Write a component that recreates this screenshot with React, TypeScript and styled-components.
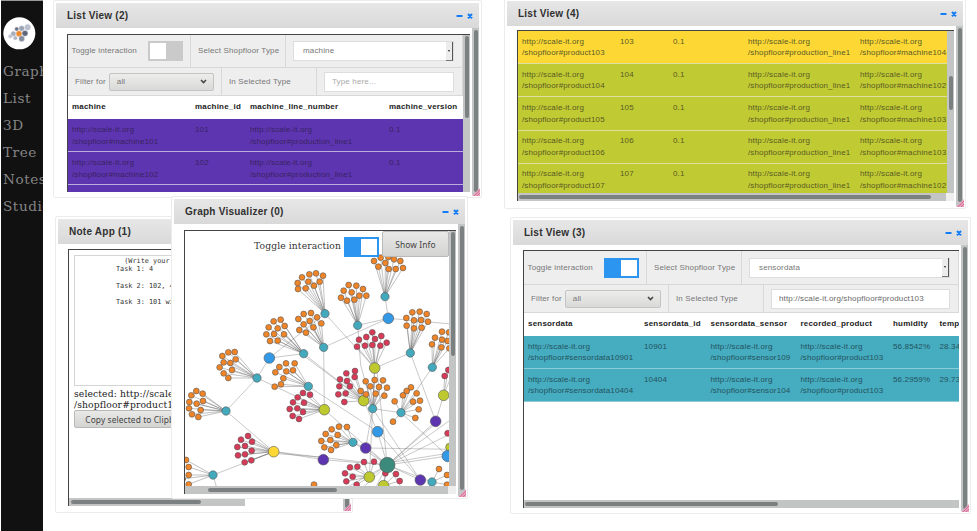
import React from "react";
import styled, { createGlobalStyle } from "styled-components";

const GlobalStyle = createGlobalStyle`
  * { box-sizing: border-box; }
  body { margin: 0; background: #fff; overflow: hidden; }
`;

const SANS = `"Liberation Sans", Arial, sans-serif`;
const SERIF = `"DejaVu Serif", serif`;

/* ---------- desktop and sidebar ---------- */

const Desktop = styled.div`
  position: relative;
  display: flex;
  width: 977px;
  height: 531px;
  overflow: hidden;
  background: #fff;
`;

const Sidebar = styled.nav`
  display: flex;
  flex-direction: column;
  width: 42px;
  margin-left: 1px;
  padding: 16px 0 0 2px;
  overflow: hidden;
  background: #111;
  border-top: 1px solid #999;
  font: 13.6px/26.9px ${SERIF};
  letter-spacing: 0.55px;
  color: #858585;
  white-space: nowrap;
`;

const Logo = styled.svg`
  flex: none;
  width: 33px;
  height: 33px;
  margin-bottom: 8px;
`;

/* ---------- window chrome ---------- */

const WindowBox = styled.section<{ $x: number; $y: number; $w: number; $h: number }>`
  position: absolute;
  left: ${(p) => p.$x}px;
  top: ${(p) => p.$y}px;
  width: ${(p) => p.$w}px;
  height: ${(p) => p.$h}px;
  display: flex;
  flex-direction: column;
  padding: 2px;
  background: #fff;
  border: 1px solid #ececec;
  border-radius: 2px;
  font: 8px/11.7px ${SANS};
  letter-spacing: 0.15px;
  color: #666;
`;

const TitleBar = styled.header`
  flex: none;
  display: flex;
  align-items: center;
  height: 25px;
  padding: 0 5px 0 11px;
  background: linear-gradient(#e7e7e7, #d9d9d9);
  color: #303030;
`;

const Title = styled.h1`
  flex: 1;
  margin: 0;
  font: bold 10px/24px ${SANS};
  letter-spacing: 0.24px;
  white-space: nowrap;
`;

const Controls = styled.svg`
  width: 18px;
  height: 8px;
`;

const Body = styled.div`
  flex: 1;
  display: flex;
  gap: 2px;
  min-height: 0;
`;

const Frame = styled.div<{ $top: number; $left: number; $bottom: number }>`
  flex: 1;
  min-width: 0;
  display: flex;
  flex-direction: column;
  margin: ${(p) => p.$top}px 0 ${(p) => p.$bottom}px ${(p) => p.$left}px;
  border-top: 1.5px solid #444;
  border-left: 1px solid #444;
  overflow: hidden;
`;

const Pane = styled.div`
  flex: 1;
  display: flex;
  min-height: 0;
  min-width: 0;
`;

const Content = styled.div`
  flex: 1;
  min-width: 0;
  overflow: hidden;
`;

const Scrollbar = styled.div<{ $before: number; $length: number; $horizontal?: boolean; $end?: boolean }>`
  flex: none;
  display: flex;
  background: ${(p) =>
    p.$end ? "linear-gradient(90deg, transparent calc(100% - 8px), #eee 0), #c3c5c5" : "#c3c5c5"};
  ${(p) =>
    p.$horizontal
      ? `height: 8px; padding: 2px 0 2px ${p.$before}px;`
      : `width: 7px; padding: ${p.$before}px 1.5px 0; flex-direction: column;`}

  &::before {
    content: "";
    border-radius: 2px;
    background: #7b8080;
    ${(p) => (p.$horizontal ? `width: ${p.$length}px; height: 4px;` : `height: ${p.$length}px; width: 4px;`)}
  }
`;

const ResizeGrip = styled.svg`
  position: absolute;
  right: 1px;
  bottom: 1px;
  width: 8px;
  height: 8px;
`;

interface WindowProps {
  title: string;
  x: number;
  y: number;
  w: number;
  h: number;
  frameTop: number;
  frameLeft?: number;
  frameBottom: number;
  thumb: number;
  controls?: boolean;
  children: React.ReactNode;
}

function Window({ title, x, y, w, h, frameTop, frameLeft = 10, frameBottom, thumb, children }: WindowProps) {
  return (
    <WindowBox $x={x} $y={y} $w={w} $h={h}>
      <TitleBar>
        <Title>{title}</Title>
        <Controls viewBox="0 0 18 8" stroke="#147df5" strokeWidth="2">
          <path d="M.5 4H6.5M12 2l4 4.2M16 2l-4 4.2" />
        </Controls>
      </TitleBar>
      <Body>
        <Frame $top={frameTop} $left={frameLeft} $bottom={frameBottom}>
          {children}
        </Frame>
        <Scrollbar $before={2} $length={thumb} />
      </Body>
      <ResizeGrip viewBox="0 0 8 8">
        <path d="M8 0V8H0Z" fill="#e6a3bd" />
        <path d="M2 8L8 2M5 8L8 5" stroke="#d2608f" strokeWidth=".8" />
      </ResizeGrip>
    </WindowBox>
  );
}

/* ---------- list view ---------- */

const ToolRow = styled.div<{ $h: number }>`
  display: flex;
  height: ${(p) => p.$h}px;
  background: #eee;
  border-bottom: 1px solid #d8d8d8;
  color: #777;
`;

const ToolCell = styled.div<{ $w?: number; $pad?: number }>`
  ${(p) => (p.$w ? `flex: none; width: ${p.$w}px;` : "flex: 1;")}
  display: flex;
  align-items: center;
  padding-left: ${(p) => p.$pad ?? 7}px;
  border-right: 1px solid #d8d8d8;
  white-space: nowrap;
`;

const ToggleTrack = styled.span<{ $on?: boolean }>`
  display: flex;
  justify-content: ${(p) => (p.$on ? "flex-end" : "flex-start")};
  width: 35px;
  height: 20px;
  margin-left: auto;
  margin-right: 7px;
  padding: 2px;
  background: ${(p) => (p.$on ? "#2b95f0" : "#cacaca")};

  &::before {
    content: "";
    width: 16px;
    background: #fff;
  }
`;

const TypeSelect = styled.span`
  flex: 1;
  display: flex;
  align-items: center;
  justify-content: space-between;
  height: 20px;
  margin-right: 8px;
  padding-left: 9px;
  background: #fff;
  border: 1px solid #ddd;
`;

const Spinner = styled.span`
  display: flex;
  align-items: center;
  justify-content: center;
  width: 7px;
  height: 19px;
  background: #ececec;
  border-right: 1px solid #555;
  border-bottom: 1px solid #777;

  &::before {
    content: "";
    border: 1.5px solid transparent;
    border-top: 2px solid #222;
    border-bottom: 0;
  }
`;

const FilterSelect = styled.span`
  flex: 1;
  display: flex;
  align-items: center;
  justify-content: space-between;
  height: 18px;
  margin: 0 7px 0 3px;
  padding: 0 6px 0 7px;
  background: linear-gradient(#ededec, #d9d9d7);
  border: 1px solid #c4c4c4;
  border-radius: 2px;
`;

const TextInput = styled.span<{ $muted?: boolean }>`
  flex: 1;
  height: 20px;
  margin-right: 8px;
  padding: 0 7px;
  line-height: 18px;
  background: #fff;
  border: 1px solid #ddd;
  color: ${(p) => (p.$muted ? "#aaa" : "#6a6a6a")};
`;

const HeadRow = styled.div<{ $cols: string }>`
  display: grid;
  grid-template-columns: ${(p) => p.$cols};
  height: 23px;
  padding-left: 4px;
  line-height: 22px;
  font-weight: bold;
  letter-spacing: 0.2px;
  color: #222;
  white-space: nowrap;
`;

const DataRow = styled.div<{ $cols: string; $bg: string; $fg: string; $line: string; $pt: number }>`
  display: grid;
  grid-template-columns: ${(p) => p.$cols};
  height: 33.2px;
  padding: ${(p) => p.$pt}px 0 0 4px;
  background: ${(p) => p.$bg};
  border-bottom: 1px solid ${(p) => p.$line};
  color: ${(p) => p.$fg};
  white-space: pre;
`;

const uri = (path: string) => `http://scale-it.org\n/shopfloor#${path}`;

interface ToolbarProps {
  on?: boolean;
  type: string;
  filter?: string;
  toggleW: number;
  filterW: number;
  rowH: number;
}

function Toolbar({ on, type, filter, toggleW, filterW, rowH }: ToolbarProps) {
  return (
    <>
      <ToolRow $h={rowH}>
        <ToolCell $w={toggleW} $pad={3.5}>
          Toggle interaction
          <ToggleTrack $on={on} />
        </ToolCell>
        <ToolCell $w={95}>Select Shopfloor Type</ToolCell>
        <ToolCell>
          <TypeSelect>
            {type}
            <Spinner />
          </TypeSelect>
        </ToolCell>
      </ToolRow>
      <ToolRow $h={28}>
        <ToolCell $w={filterW}>
          Filter for
          <FilterSelect>
            all
            <svg width="7" height="5" viewBox="0 0 7 5" fill="none" stroke="#444" strokeWidth="1.5">
              <path d="M1 1l2.5 2.6L6 1" />
            </svg>
          </FilterSelect>
        </ToolCell>
        <ToolCell $w={95}>In Selected Type</ToolCell>
        <ToolCell>
          <TextInput $muted={!filter}>{filter ?? "Type here..."}</TextInput>
        </ToolCell>
      </ToolRow>
    </>
  );
}

const MACHINE_COLS = "123px 55px 139px 1fr";
const PRODUCT_COLS = "98px 53px 75px 112px 1fr";
const SENSOR_COLS = "116px 66.5px 90px 92.5px 46.5px 1fr";

const products: [number, number][] = [
  [103, 104],
  [104, 102],
  [105, 103],
  [106, 103],
  [107, 102],
];

function Cells({ values }: { values: string[] }) {
  return (
    <>
      {values.map((v, i) => (
        <span key={i}>{v}</span>
      ))}
    </>
  );
}

/* ---------- note app ---------- */

const NoteBody = styled.div`
  flex: 1;
  padding: 5px 0 0 5px;
  overflow: hidden;
  font: 9.2px/11px ${SERIF};
  letter-spacing: 0.12px;
  color: #222;
  white-space: pre;
`;

const NoteArea = styled.div`
  width: 170px;
  height: 131px;
  margin-bottom: 2px;
  padding: 1px 0 0 41px;
  border: 1px solid #d5d5d5;
  font: 6.85px/8.17px "DejaVu Sans Mono", monospace;
  letter-spacing: 0;
  color: #333;
`;

const Button = styled.button`
  display: flex;
  align-items: center;
  justify-content: center;
  height: 18px;
  width: 130px;
  padding: 0;
  background: linear-gradient(#e9e9e8, #d3d3d1);
  border: 1px solid #b9b9b7;
  border-radius: 2px;
  font: 8.4px "Noto Sans", sans-serif;
  letter-spacing: 0.1px;
  color: #444;
`;

const NoteScroll = styled.div`
  width: 176px;
`;

/* ---------- graph ---------- */

const GraphCanvas = styled.div`
  position: relative;
  flex: 1;
  overflow: hidden;
`;

const GraphSvg = styled.svg`
  display: block;
  width: 264px;
  height: 256px;
`;

const GraphTools = styled.div`
  position: absolute;
  top: 0;
  right: 0;
  display: flex;
  align-items: flex-start;
  font: 9.2px/30px ${SERIF};
  letter-spacing: 0.1px;
  color: #333;
`;

const GraphToggle = styled(ToggleTrack)`
  margin: 6px 3px 0 3px;
`;

const InfoButton = styled(Button)`
  width: 67px;
  height: 26px;
`;

const TEAL = "#43a9bd";
const LIME = "#bdc92f";
const BLUE = "#3399e6";
const PURPLE = "#5d35b0";
const ORANGE = "#f08528";
const RED = "#d83a58";
const YELLOW = "#fdd835";
const GREEN = "#3b8a7c";

type Point = [number, number];
interface Cluster {
  origin: Point;
  hub: Point;
  color: string;
  leaf: string;
  leaves: Point[];
}

const NW: Point = [540, 675];
const NE: Point = [975, 585];
const SW: Point = [540, 1080];
const SE: Point = [975, 1080];

const cluster = (origin: Point, hub: Point, color: string, leaf: string, flat: string): Cluster => ({
  origin,
  hub,
  color,
  leaf,
  leaves: flat.split(" ").map((p) => p.split(",").map(Number) as Point),
});

const clusters: Cluster[] = [
  cluster(NW, [435, 266], TEAL, ORANGE, "366,157 388,148 408,145 429,152 353,174 385,170 419,170 354,192 377,190 402,182"),
  cluster(NW, [431, 367], TEAL, ORANGE, "371,267 393,264 355,282 411,277 389,288 371,298 424,295 400,307 358,315 378,323"),
  cluster(NW, [371, 386], TEAL, ORANGE, "281,289 302,284 266,307 293,310 314,303 259,328 282,327 312,328 270,348 293,347"),
  cluster(NW, [231, 459], TEAL, ORANGE, "145,382 164,381 127,393 167,403 131,412 151,414 119,427 156,435 131,445 145,459"),
  cluster(SW, [385, 79], TEAL, ORANGE, "318,10 344,10 298,21 286,37 319,34 339,31 310,55 303,73 284,80"),
  cluster(SW, [138, 153], TEAL, ORANGE, "49,93 34,106 68,101 28,126 50,131 69,123 27,145 62,150 36,163 55,171"),
  cluster(SW, [433, 149], LIME, RED, "369,99 390,104 353,112 339,127 372,128 329,147 352,145 369,156 338,168 357,177"),
  cluster(SW, [281, 275], YELLOW, RED, "204,228 183,239 216,245 172,261 195,258 215,272 174,286 195,283 194,307 214,301"),
  cluster(SW, [99, 345], TEAL, ORANGE, "18,300 26,321 26,345 26,373 8,357"),
  cluster(NE, [180, 305], TEAL, ORANGE, "147,198 167,188 207,193 226,198 181,204 160,215 191,222 212,222 234,219 190,186"),
  cluster(NE, [98, 391], TEAL, ORANGE, "71,270 94,272 114,282 56,287 80,292 48,308 103,302 124,302 66,317 88,314"),
  cluster(NE, [256, 474], TEAL, ORANGE, "262,352 284,350 305,357 244,369 267,376 288,375 309,380 245,392 267,400 290,398"),
  cluster(NE, [149, 519], LIME, RED, "142,412 102,434 124,426 169,423 150,432 185,443 96,455 120,452 142,450 166,452"),
  cluster(NE, [322, 517], TEAL, ORANGE, "351,410 372,412 330,428 351,434 368,438 321,448 349,457 373,460"),
  cluster(SE, [116, 122], LIME, RED, "90,33 64,40 89,51 45,58 66,63 43,79 75,79 40,103 62,100 58,126"),
  cluster(SE, [143, 146], TEAL, ORANGE, "122,64 149,60 174,61 136,79 162,81 186,83 107,93 123,103 152,101 178,107"),
  cluster(SE, [228, 158], TEAL, ORANGE, "258,82 245,93 275,100 234,106 209,124 264,125 285,122 281,148 271,174 204,185"),
  cluster(SE, [356, 106], LIME, RED, "370,30 359,48"),
  cluster(SE, [84, 247], TEAL, ORANGE, "42,200 66,201 20,208 2,222 38,225 16,240 -11,243 -2,262 34,255 18,270"),
  cluster(SE, [133, 351], LIME, RED, "117,306 147,305 75,322 97,320 60,340 83,350 64,364 95,374"),
  cluster(SE, [176, 377], LIME, RED, "181,340 213,342 224,363"),
  cluster(SE, [321, 366], TEAL, ORANGE, "342,327 366,345 366,374"),
];

/* Free nodes and links share the SE origin. */
const nodes: [number, number, number, string][] = [
  [-167, -6, 16, BLUE],
  [190, -125, 16, BLUE],
  [-5, 299, 16, PURPLE],
  [332, 184, 16, PURPLE],
  [122, 264, 16, PURPLE],
  [158, 215, 16, BLUE],
  [374, 262, 12, LIME],
  [368, 288, 17, BLUE],
  [286, 360, 16, PURPLE],
  [187, 315, 23, GREEN],
  [368, 220, 9, RED],
  [-33, 374, 9, ORANGE],
];

const links = `-167,-6 -64,-19|-167,-6 0,-139|-167,-6 -204,54|-204,54 -297,153|-297,153 -154,275|-154,275 -336,345
-336,345 -320,400|-154,275 -5,299|-154,275 187,315|-154,280 -5,292|-5,299 187,315|-204,54 -2,149|-50,79 158,215
-64,-19 116,122|-4,-38 -2,149|-4,-38 190,-125|0,-139 149,24|98,-104 190,-125|180,-190 190,-125|190,-125 256,-119
256,-119 390,-107|98,-104 107,15|107,15 143,146|149,24 256,-21|256,-21 332,184|149,24 143,146|143,146 122,264
149,24 133,351|155,24 187,315|116,122 158,215|116,122 -60,-10|143,146 228,158|143,146 286,360|228,158 322,22
228,158 368,288|356,106 332,184|332,184 187,315|158,215 187,315|158,215 286,360|122,264 187,315|122,264 390,268
122,264 84,247|187,315 368,288|187,309 368,280|187,315 390,170|187,315 400,210|187,315 286,360|187,315 321,366
187,315 133,351|187,315 176,377|187,315 84,247|187,315 95,400|187,315 143,400|187,315 240,400|356,106 390,20
187,315 -2,149|187,315 332,190|187,315 60,385`
  .split(/[|\n]/)
  .map((l) => "M" + l.replace(" ", "L"))
  .join("");

function Graph() {
  return (
    <GraphSvg viewBox="555 693 792 768">
      <path transform={`translate(${SE})`} d={links} stroke="#777" strokeOpacity=".5" strokeWidth="2.4" fill="none" />
      {clusters.map((c, i) => (
        <g key={i} transform={`translate(${c.origin})`}>
          <path
            d={c.leaves.map((p) => `M${c.hub}L${p}`).join("")}
            stroke="#555"
            strokeOpacity=".48"
            strokeWidth="2.3"
          />
        </g>
      ))}
      {clusters.map((c, i) => (
        <g key={i} transform={`translate(${c.origin})`} stroke="#555" strokeWidth="1.8">
          <circle cx={c.hub[0]} cy={c.hub[1]} r={c.color === TEAL ? 12.5 : 16} fill={c.color} />
          {c.leaves.map(([x, y], k) => (
            <circle key={k} cx={x} cy={y} r="8.8" fill={c.leaf} />
          ))}
        </g>
      ))}
      <g transform={`translate(${SE})`} stroke="#555" strokeWidth="1.8">
        {nodes.map(([x, y, r, color], i) => (
          <circle key={i} cx={x} cy={y} r={r} fill={color} />
        ))}
      </g>
    </GraphSvg>
  );
}

/* ---------- page ---------- */

export default function App() {
  return (
    <Desktop>
      <GlobalStyle />
      <Sidebar>
        <Logo viewBox="0 0 99 99">
          <circle cx="49" cy="49" r="48" fill="#fff" />
          <g stroke="#ddd" strokeWidth="1">
            <circle cx="74" cy="31" r="9" fill="#b9bfcf" />
            <circle cx="56" cy="34" r="8" fill="#9ba3b5" />
            <circle cx="41" cy="36" r="6" fill="#6c7588" />
            <circle cx="31" cy="50" r="7.5" fill="#a7aebd" />
            <circle cx="48" cy="50" r="8.5" fill="#ef8a2c" />
            <circle cx="66" cy="49" r="8.5" fill="#5d677d" />
            <circle cx="22" cy="58" r="6" fill="#c1c7d4" />
            <circle cx="37" cy="63" r="6" fill="#aeb5c3" />
            <circle cx="56" cy="65" r="8.5" fill="#858da0" />
          </g>
        </Logo>
        <span>Graph</span>
        <span>List</span>
        <span>3D</span>
        <span>Tree</span>
        <span>Notes</span>
        <span>Studio</span>
      </Sidebar>

      <Window title="List View (2)" x={53} y={0} w={429} h={198} frameTop={6} frameLeft={11} frameBottom={3} thumb={162}>
        <Pane>
          <Content>
            <Toolbar type="machine" toggleW={123} filterW={154} rowH={33} />
            <HeadRow $cols={MACHINE_COLS}>
              <Cells values={["machine", "machine_id", "machine_line_number", "machine_version"]} />
            </HeadRow>
            {["101", "102", "103"].map((id) => (
              <DataRow key={id} $cols={MACHINE_COLS} $bg="#5e35b1" $fg="#38235f" $line="#bbaedb" $pt={5}>
                <Cells values={[uri("machine" + id), id, uri("production_line1"), "0.1"]} />
              </DataRow>
            ))}
          </Content>
          <Scrollbar $before={1} $length={82} />
        </Pane>
      </Window>

      <Window title="List View (4)" x={504} y={-2} w={462} h={211} frameTop={4} frameBottom={5} thumb={174}>
        <Pane>
          <Content>
            {products.map(([id, machine], i) => (
              <DataRow
                key={id}
                $cols={PRODUCT_COLS}
                $bg={i ? "#c0ca33" : "#fdd835"}
                $fg="#5a5a24"
                $line="#dde0a0"
                $pt={4.5}
              >
                <Cells
                  values={[uri("product" + id), String(id), "0.1", uri("production_line1"), uri("machine" + machine)]}
                />
              </DataRow>
            ))}
          </Content>
          <Scrollbar $before={45} $length={34} />
        </Pane>
        <Scrollbar $horizontal $before={1} $length={412} $end />
      </Window>

      <Window title="Note App (1)" x={55} y={216} w={298} h={297} frameTop={5} frameBottom={4} thumb={262}>
        <NoteBody>
          <NoteArea>{"  (Write your notes here)\nTask 1: 4\n\nTask 2: 102, 4\n\nTask 3: 101 with"}</NoteArea>
          {"selected: http://scale-it.org\n/shopfloor#product103"}
          <Button>Copy selected to Clipboard</Button>
        </NoteBody>
        <NoteScroll>
          <Scrollbar $horizontal $before={2} $length={130} />
        </NoteScroll>
      </Window>

      <Window title="Graph Visualizer (0)" x={171} y={196} w={297} h={303} frameTop={6} frameBottom={2} thumb={264}>
        <Pane>
          <GraphCanvas>
            <Graph />
            <GraphTools>
              Toggle interaction
              <GraphToggle $on />
              <InfoButton>Show Info</InfoButton>
            </GraphTools>
          </GraphCanvas>
          <Scrollbar $before={1} $length={124} />
        </Pane>
        <Scrollbar $horizontal $before={23} $length={129} $end />
      </Window>

      <Window title="List View (3)" x={510} y={217} w={461} h={297} frameTop={5} frameBottom={3} thumb={262}>
        <Content>
          <Toolbar
            on
            type="sensordata"
            filter="http://scale-it.org/shopfloor#product103"
            toggleW={123}
            filterW={145}
            rowH={34}
          />
          <HeadRow $cols={SENSOR_COLS}>
            <Cells
              values={["sensordata", "sensordata_id", "sensordata_sensor", "recorded_product", "humidity", "temperature"]}
            />
          </HeadRow>
          {[
            ["10901", "109", "56.8542%", "28.3412"],
            ["10404", "104", "56.2959%", "29.7311"],
          ].map(([id, sensor, humidity, temp]) => (
            <DataRow key={id} $cols={SENSOR_COLS} $bg="#46acc0" $fg="#23535d" $line="#8cccd8" $pt={4.5}>
              <Cells
                values={[uri("sensordata" + id), id, uri("sensor" + sensor), uri("product103"), humidity, temp]}
              />
            </DataRow>
          ))}
        </Content>
        <Scrollbar $horizontal $before={1} $length={253} />
      </Window>
    </Desktop>
  );
}
